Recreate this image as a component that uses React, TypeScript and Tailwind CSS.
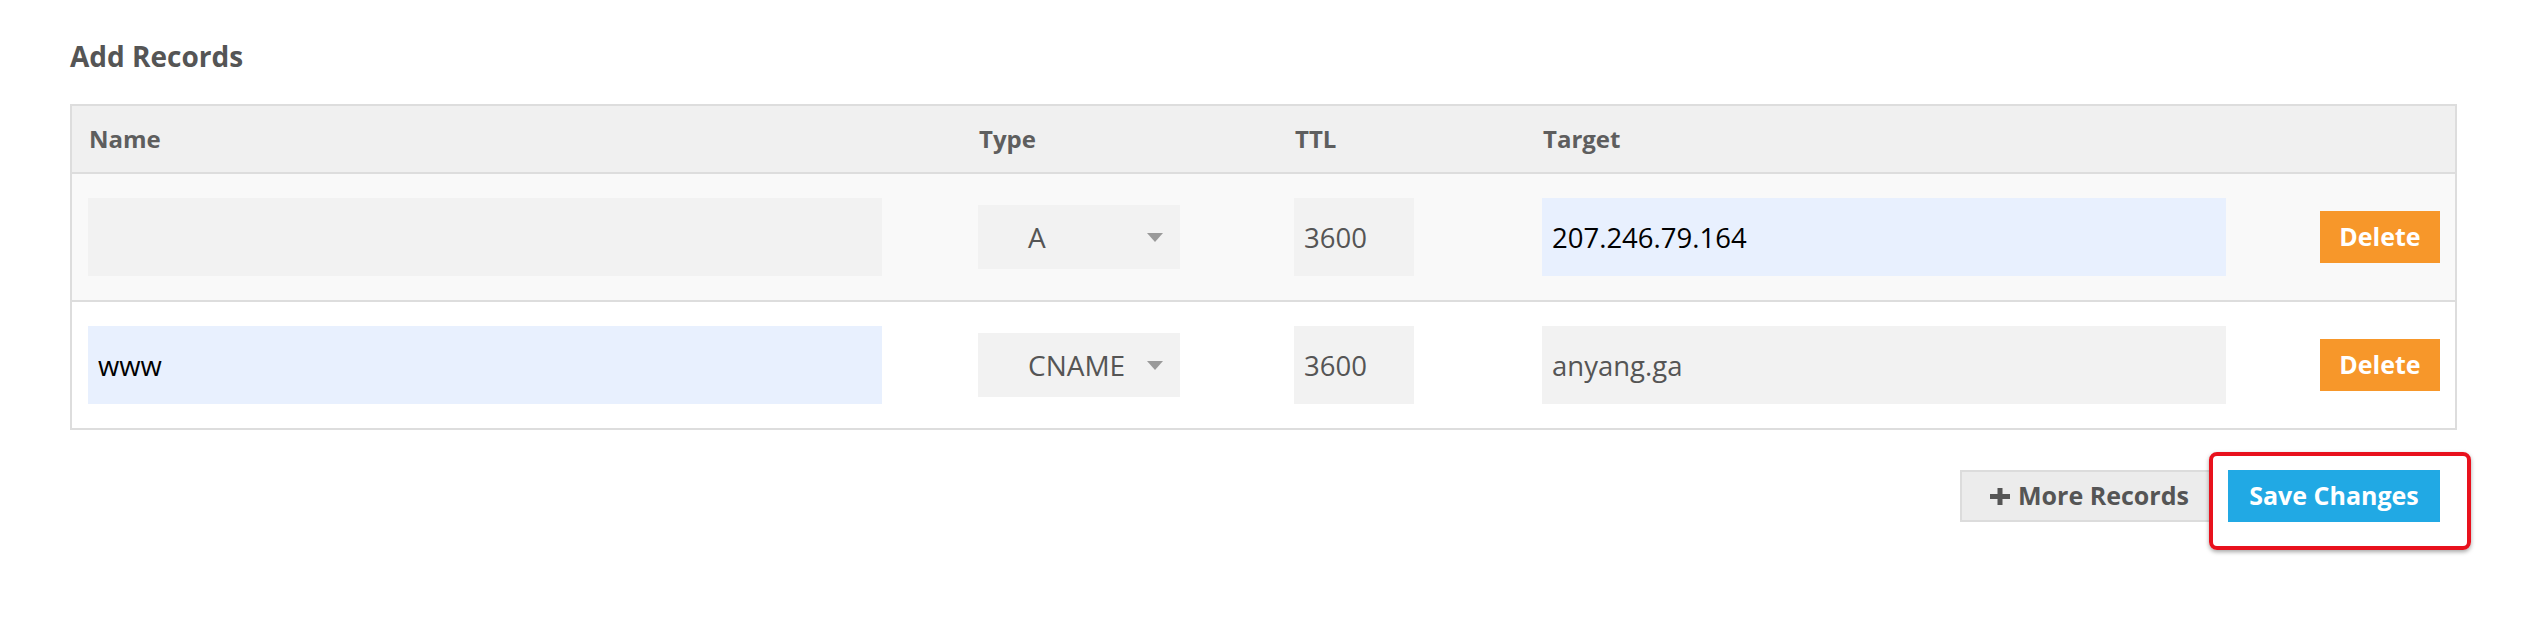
import React from 'react';

type RecordRow = {
  name: string;
  type: string;
  ttl: string;
  target: string;
  nameFilled?: boolean;
  targetFilled?: boolean;
};

const rows: RecordRow[] = [
  { name: '', type: 'A', ttl: '3600', target: '207.246.79.164', targetFilled: true },
  { name: 'www', type: 'CNAME', ttl: '3600', target: 'anyang.ga', nameFilled: true },
];

const cols = 'grid grid-cols-[890px_316px_248px_778px_120px] items-center pl-[16px] pr-[15px]';

const Field: React.FC<{ value: string; width: string; filled?: boolean }> = ({ value, width, filled }) => (
  <input
    readOnly
    defaultValue={value}
    className={`${width} h-[78px] px-[10px] text-[27.5px] outline-none ${
      filled ? 'bg-[#e8f0fe] text-black' : 'bg-[#f2f2f2] text-[#555]'
    }`}
  />
);

const TypeSelect: React.FC<{ value: string }> = ({ value }) => (
  <div className="w-[202px] h-[64px] bg-[#f2f2f2] flex items-center pl-[50px] pr-[17px] text-[28px] text-[#555]">
    <span className="flex-1">{value}</span>
    <svg width="16" height="9" viewBox="0 0 16 9">
      <path d="M0 0h16L8 9z" fill="#9a9a9a" />
    </svg>
  </div>
);

const App: React.FC = () => {
  return (
    <div className="min-h-screen bg-white font-['Open_Sans',sans-serif] pt-[42px] pl-[70px]">
      <h2 className="text-[28px] leading-[28px] font-bold text-[#555]">Add Records</h2>

      <div className="mt-[34px] w-[2387px] border-2 border-[#ddd]">
        <div className={`${cols} h-[68px] bg-[#f0f0f0] border-b-2 border-[#ddd] text-[24px] font-bold text-[#5e5e5e]`}>
          <div className="pl-[1px]">Name</div>
          <div className="pl-[1px]">Type</div>
          <div className="pl-[1px]">TTL</div>
          <div className="pl-[1px]">Target</div>
          <div />
        </div>
        {rows.map((r, i) => (
          <div
            key={i}
            className={`${cols} ${i === 0 ? 'h-[128px] bg-[#f9f9f9] border-b-2 border-[#ddd]' : 'h-[126px] bg-white'}`}
          >
            <Field value={r.name} width="w-[794px]" filled={r.nameFilled} />
            <TypeSelect value={r.type} />
            <Field value={r.ttl} width="w-[120px]" />
            <Field value={r.target} width="w-[684px]" filled={r.targetFilled} />
            <button className="w-[120px] h-[52px] bg-[#f7972a] text-white text-[25px] font-bold">Delete</button>
          </div>
        ))}
      </div>

      <div className="mt-[40px] w-[2387px] flex justify-end gap-[16px] pr-[17px]">
        <button className="h-[52px] w-[252px] flex items-center pl-[28px] gap-[8px] bg-[#ececec] border-2 border-[#dcdcdc] text-[25px] font-bold text-[#555]">
          <svg width="20" height="17" viewBox="0 0 20 17">
            <path d="M7.5 0h5v6h7.5v5h-7.5v6h-5v-6H0V6h7.5z" fill="#555" />
          </svg>
          More Records
        </button>
        <div className="relative">
          <button className="h-[52px] w-[212px] bg-[#21a9e4] text-white text-[25px] font-bold">Save Changes</button>
          <div className="absolute -left-[19px] -top-[18px] -right-[31px] -bottom-[28px] border-[4px] border-[#e8111d] rounded-[8px] shadow-[0_2px_4px_rgba(0,0,0,0.35)]" />
        </div>
      </div>
    </div>
  );
};

export default App;
